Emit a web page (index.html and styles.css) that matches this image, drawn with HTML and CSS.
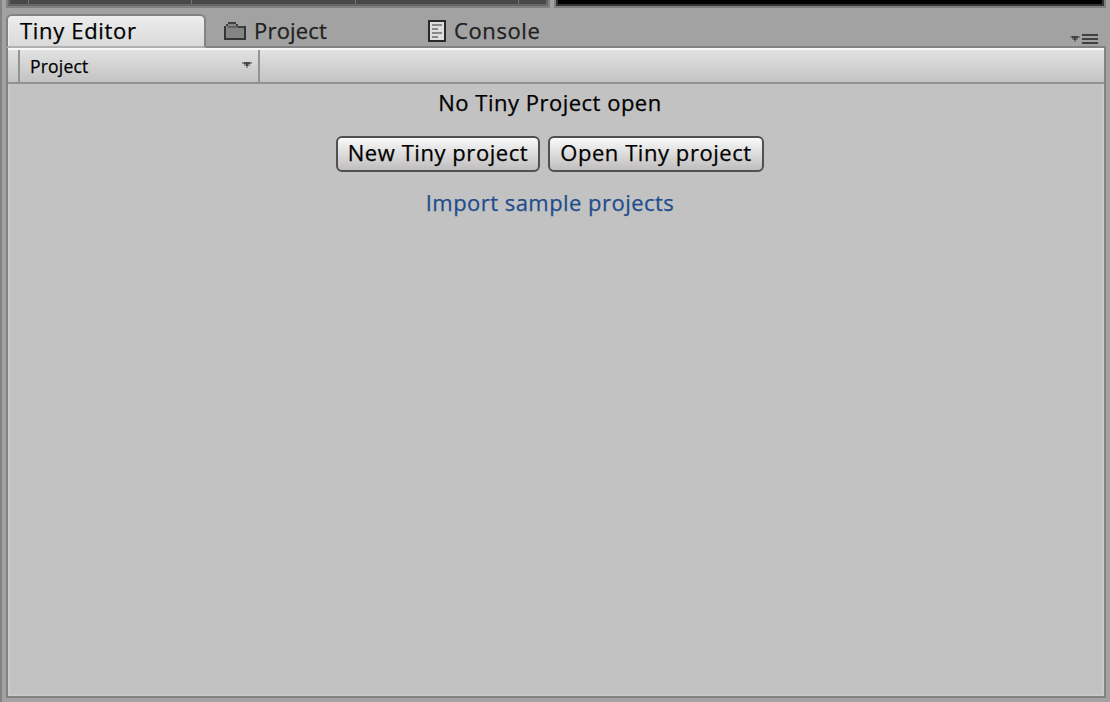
FILE: index.html
```html
<!DOCTYPE html>
<html lang="en">
<head>
<meta charset="utf-8">
<title>Tiny Editor</title>
<link rel="stylesheet" href="styles.css">
</head>
<body>
<div class="window">
  <div class="upper">
    <div class="timeline"></div>
    <div class="preview"></div>
  </div>
  <nav class="tabs">
    <div class="tab active"><span class="label-editor">Tiny Editor</span></div>
    <div class="tab tab-project">
      <svg class="folder" width="22" height="18" viewBox="0 0 22 18">
        <path d="M0 4H2V2H4V0H12V2H14V4H22V18H0Z" fill="#858585"/>
        <path d="M4 1H12M2 3H4M12 3H14M14 5H22" fill="none" stroke="#404040" stroke-width="2"/>
        <path d="M4 5H14" stroke="#606060" stroke-width="2"/>
        <path d="M1 4V17H21V4" fill="none" stroke="#353535" stroke-width="2"/>
      </svg>
      <span class="label-project">Project</span>
    </div>
    <div class="tab tab-console">
      <svg width="18" height="22" viewBox="0 0 18 22">
        <rect x="1" y="1" width="16" height="20" fill="#dedede" stroke="#292929" stroke-width="2"/>
        <path d="M4 5H14M4 9H10M4 13H14M4 17H10" stroke="#888" stroke-width="2"/>
      </svg>
      <span class="label-console">Console</span>
    </div>
    <svg class="menu" width="28" height="12" viewBox="0 0 28 12">
      <path d="M0 2H10V4H8V6H6V8H4V6H2V4H0Z" fill="#777"/>
      <path d="M2 2H8V4H6V6H4V4H2Z" fill="#404040"/>
      <path d="M12 1H28M12 5H28M12 9H28" stroke="#404040" stroke-width="2"/>
    </svg>
  </nav>
  <main class="panel">
    <div class="toolbar">
      <div class="dropdown">
        <span class="label-dropdown">Project</span>
        <svg width="10" height="6" viewBox="0 0 10 6">
          <path d="M0 0H10V2H8V4H6V6H4V4H2V2H0Z" fill="#8b8b8b"/>
          <path d="M2 0H8V2H6V4H4V2H2Z" fill="#484848"/>
        </svg>
      </div>
    </div>
    <div class="content">
      <p class="message">No Tiny Project open</p>
      <div class="actions">
        <button class="button button-new">New Tiny project</button>
        <button class="button button-open">Open Tiny project</button>
      </div>
      <a class="link">Import sample projects</a>
    </div>
  </main>
</div>
</body>
</html>
```
FILE: styles.css
```css
* { box-sizing: border-box; }
body { margin: 0; font-family: "Open Sans", "Noto Sans", sans-serif; font-size: 22px; color: #000; -webkit-text-stroke: .25px currentColor; }
.window { width: 1110px; height: 702px; padding: 0 4px 4px; background: #a2a2a2; border-left: 2px solid #828282; display: flex; flex-direction: column; overflow: hidden; }
.upper { height: 8px; display: flex; gap: 4px; margin-right: -1px; padding-right: 1px; }
.timeline { width: 544px; border: 2px solid #808080; border-top: 0; background: #494949; box-shadow: inset 2px -2px #666, inset -2px 0 #666; background-image: repeating-linear-gradient(90deg, transparent 0 20px, #747474 20px 21px, transparent 21px 163.5px); }
.preview { flex: 1; border: 2px solid #808080; border-top: 0; background: #000; box-shadow: inset 2px -2px #333, inset -2px 0 #333; }
.tabs { height: 40px; margin-bottom: -2px; padding-top: 6px; display: flex; position: relative; }
.tab { height: 34px; display: flex; align-items: center; color: #202020; white-space: nowrap; }
.tab span { padding-bottom: 2px; }
.label-editor { letter-spacing: .68px; }
.label-project { letter-spacing: .2px; }
.label-console { letter-spacing: .6px; }
.active { width: 200px; padding-left: 12px; color: #000; border: 2px solid #828282; border-bottom: 2px solid #b0b0b0; border-radius: 6px 6px 0 0; background: linear-gradient(#ececec, #dadada); box-shadow: inset 1px 1px #eee; }
.tab-project { width: 204px; padding-left: 18px; gap: 8px; }
.tab-console { padding-left: 18px; gap: 8px; }
.menu { margin: 20px 8px 0 auto; }
.panel { flex: 1; border: 2px solid #828282; background: #c2c2c2; box-shadow: inset 0 0 0 2px #cacaca; display: flex; flex-direction: column; }
.toolbar { height: 36px; border-top: 2px solid #f7f7f7; border-bottom: 2px solid #929292; background: linear-gradient(#e2e2e2, #c3c3c3); padding-left: 10px; display: flex; }
.dropdown { width: 242px; border: solid #939393; border-width: 0 2px; padding: 0 6px 0 10px; display: flex; align-items: center; justify-content: space-between; font-size: 17.5px; letter-spacing: .2px; }
.dropdown svg { margin-top: -3px; }
.content { display: flex; flex-direction: column; align-items: center; padding: 3px 12px 0 0; letter-spacing: .5px; }
.message { margin: 0; line-height: 30px; }
.actions { display: flex; gap: 8px; margin: 19px 0 15px; letter-spacing: .56px; }
.button { height: 36px; padding: 0 0 4px; border: 2px solid #505050; border-radius: 6px; background: linear-gradient(#fafafa, #bfbdbd); font: inherit; letter-spacing: inherit; color: #000; line-height: 28px; white-space: nowrap; }
.button-new { width: 204px; }
.button-open { width: 216px; }
.link { color: #1e4d8c; line-height: 30px; letter-spacing: .46px; }
```
